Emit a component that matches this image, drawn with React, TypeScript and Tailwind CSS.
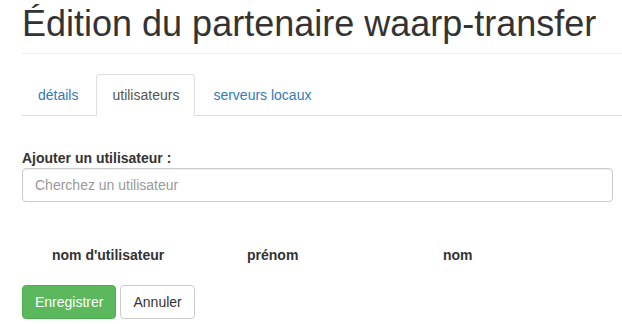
import React from 'react';

const tabs = [
  { label: 'détails', active: false },
  { label: 'utilisateurs', active: true },
  { label: 'serveurs locaux', active: false },
];

const columns = ['nom d\'utilisateur', 'prénom', 'nom'];

const App = () => {
  return (
    <div className="min-h-screen bg-white pl-[22px] pt-[4px] text-[#333] font-['Liberation_Sans',Arial,sans-serif] text-[14px] leading-[20px]">
      <div className="border-b border-[#eee] pb-[9px]">
        <h1 className="text-[36px] leading-[40px] font-medium">Édition du partenaire waarp-transfer</h1>
      </div>

      <ul className="mt-[20px] flex border-b border-[#ddd]">
        {tabs.map((tab) => (
          <li key={tab.label} className="-mb-px mr-[2px]">
            <a
              href="#"
              className={
                tab.active
                  ? 'block rounded-t-[4px] border border-[#ddd] border-b-transparent bg-white px-[15px] py-[10px] text-[#555]'
                  : 'block rounded-t-[4px] border border-transparent px-[15px] py-[10px] text-[#337ab7]'
              }
            >
              {tab.label}
            </a>
          </li>
        ))}
      </ul>

      <div className="mr-[9px]">
        <label className="mt-[32px] block font-bold">Ajouter un utilisateur :</label>
        <input
          type="text"
          placeholder="Cherchez un utilisateur"
          className="block h-[34px] w-full rounded-[4px] border border-[#ccc] px-[12px] py-[6px] text-[14px] text-[#555] shadow-[inset_0_1px_1px_rgba(0,0,0,0.075)] outline-none placeholder:text-[#999]"
        />

        <div className="mt-[43px] grid grid-cols-[195px_196px_1fr] pl-[30px] font-bold">
          {columns.map((col) => (
            <div key={col}>{col}</div>
          ))}
        </div>

        <div className="mt-[20px] flex gap-[4px]">
          <button className="h-[34px] rounded-[4px] border border-[#4cae4c] bg-[#5cb85c] px-[12px] text-white">
            Enregistrer
          </button>
          <button className="h-[34px] rounded-[4px] border border-[#ccc] bg-white px-[12px] text-[#333]">
            Annuler
          </button>
        </div>
      </div>
    </div>
  );
};

export default App;
